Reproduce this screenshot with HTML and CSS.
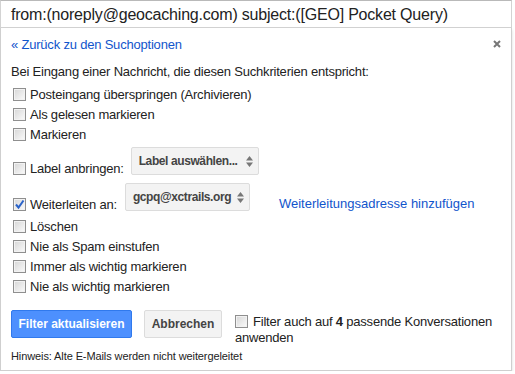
FILE: index.html
```html
<!DOCTYPE html>
<html lang="de">
<head>
    <meta charset="UTF-8">
    <title>Filter bearbeiten</title>
    <link rel="stylesheet" href="styles.css">
</head>
<body>
    <div class="search">from:(noreply@geocaching.com) subject:([GEO] Pocket Query)</div>
    <div class="panel">
        <div class="head">
            <a class="back" href="#">« Zurück zu den Suchoptionen</a>
            <svg class="close" width="8" height="8" viewBox="0 0 8 8"><path d="M1 1L7 7M7 1L1 7" stroke="#777" stroke-width="2"/></svg>
        </div>
        <div class="intro">Bei Eingang einer Nachricht, die diesen Suchkriterien entspricht:</div>
        <div class="opts">
            <div class="opt"><span class="cb"></span>Posteingang überspringen (Archivieren)</div>
            <div class="opt"><span class="cb"></span>Als gelesen markieren</div>
            <div class="opt"><span class="cb"></span>Markieren</div>
            <div class="selrow">
                <div class="opt low"><span class="cb"></span>Label anbringen:</div>
                <div class="sel sel-label"><span>Label auswählen...</span><svg class="arr" width="7" height="11" viewBox="0 0 7 11"><path d="M0 4.5L3.5 0L7 4.5ZM0 6.5L3.5 11L7 6.5Z" fill="#777"/></svg></div>
            </div>
            <div class="selrow second">
                <div class="opt low"><span class="cb on"><svg width="11" height="11" viewBox="0 0 11 11"><path d="M2 5.5L4.5 8.5L9.5 1.5" stroke="#2a63c9" stroke-width="2" fill="none"/></svg></span>Weiterleiten an:</div>
                <div class="sel sel-fwd"><span>gcpq@xctrails.org</span><svg class="arr" width="7" height="11" viewBox="0 0 7 11"><path d="M0 4.5L3.5 0L7 4.5ZM0 6.5L3.5 11L7 6.5Z" fill="#777"/></svg></div>
                <a class="addlink low" href="#">Weiterleitungsadresse hinzufügen</a>
            </div>
            <div class="opt gap"><span class="cb"></span>Löschen</div>
            <div class="opt"><span class="cb"></span>Nie als Spam einstufen</div>
            <div class="opt"><span class="cb"></span>Immer als wichtig markieren</div>
            <div class="opt"><span class="cb"></span>Nie als wichtig markieren</div>
        </div>
        <div class="foot">
            <div class="btn btn-blue">Filter aktualisieren</div>
            <div class="btn btn-grey">Abbrechen</div>
            <p class="apply"><span class="cb"></span><span>Filter auch auf</span> <b>4</b> <span>passende Konversationen</span><br><span>anwenden</span></p>
        </div>
        <div class="note">Hinweis: Alte E-Mails werden nicht weitergeleitet</div>
    </div>
</body>
</html>
```

FILE: styles.css
```css
body{
    margin: 0;
    font-family: "Liberation Sans", Arial, sans-serif;
    font-size: 13px;
    letter-spacing: -0.2px;
    color: #222;
    background: #fff;
}
.search{
    width: 512px;
    height: 28px;
    box-sizing: border-box;
    border: 1px solid #d3d3d3;
    border-top-color: #b9b9b9;
    padding: 1px 10px 0;
    font-size: 16px;
    line-height: 25px;
    white-space: nowrap;
}
.panel{
    width: 512px;
    box-sizing: border-box;
    border: 1px solid #cfcfcf;
    border-top: 0;
    box-shadow: 0 2px 3px rgba(0,0,0,0.15);
    padding: 9px 10px 7px;
}
.head{
    display: flex;
    justify-content: space-between;
    align-items: center;
    line-height: 16px;
}
.back, .addlink{
    color: #15c;
    text-decoration: none;
}
.close{
    margin-top: -3px;
}
.intro{
    margin-top: 11px;
    line-height: 16px;
}
.opts{
    margin-top: 4px;
}
.opt{
    display: flex;
    align-items: center;
    height: 20px;
    white-space: nowrap;
}
.cb{
    display: inline-block;
    flex: none;
    width: 13px;
    height: 13px;
    box-sizing: border-box;
    border: 1px solid #8f8f8f;
    background: linear-gradient(135deg, #d6d6d6, #fbfbfb);
    box-shadow: inset 0 0 0 1px #f2f2f2;
    margin: 0 4px 0 2px;
    position: relative;
}
.cb svg{
    position: absolute;
    left: 0;
    top: 0;
}
.selrow{
    display: flex;
    align-items: flex-end;
    margin-top: 3px;
}
.selrow.second{
    margin-top: 8px;
}
.low{
    margin-bottom: -3px;
}
.sel{
    display: flex;
    flex: none;
    align-items: center;
    justify-content: space-between;
    height: 28px;
    box-sizing: border-box;
    border: 1px solid #dcdcdc;
    border-radius: 2px;
    background: #f3f3f3;
    padding: 0 5px 0 7px;
    font-size: 12px;
    font-weight: bold;
    letter-spacing: -0.4px;
    color: #444;
    white-space: nowrap;
}
.sel-label{
    width: 128px;
    margin-left: 7px;
}
.sel-fwd{
    width: 125px;
    margin-left: 8px;
}
.addlink{
    margin-left: 29px;
    line-height: 20px;
    letter-spacing: 0;
    white-space: nowrap;
}
.opt.gap{
    margin-top: 5px;
}
.foot{
    display: flex;
    align-items: flex-start;
    margin-top: 14px;
}
.btn{
    flex: none;
    height: 28px;
    box-sizing: border-box;
    border-radius: 2px;
    font-size: 12px;
    font-weight: bold;
    letter-spacing: 0;
    line-height: 26px;
    text-align: center;
    white-space: nowrap;
}
.btn-blue{
    width: 121px;
    background: #4d90fe;
    border: 1px solid #3079ed;
    color: #fff;
}
.btn-grey{
    width: 78px;
    margin-left: 12px;
    background: #f3f3f3;
    border: 1px solid #dcdcdc;
    color: #444;
}
.apply{
    margin: 4px 0 0 13px;
    line-height: 16px;
    white-space: nowrap;
}
.apply .cb{
    margin: 0 5px 0 0;
    vertical-align: -2px;
}
.note{
    margin-top: 3px;
    font-size: 11px;
    letter-spacing: -0.1px;
    line-height: 14px;
}
```
